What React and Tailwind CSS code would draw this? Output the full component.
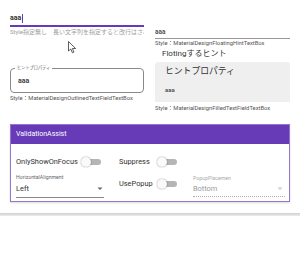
import React from "react";

const font = { fontFamily: 'Roboto, "Noto Sans CJK JP", sans-serif' };

function Toggle() {
  return (
    <div className="relative w-[20px] h-[10px] flex items-center">
      <div className="absolute left-[3px] right-0 h-[6px] rounded-full bg-[#b5b5b5]" />
      <div className="absolute left-0 w-[10px] h-[10px] rounded-full bg-[#fafafa] shadow-[0_0_1.5px_rgba(0,0,0,0.5)]" />
    </div>
  );
}

function Arrow({ color }) {
  return (
    <svg width="6" height="4" viewBox="0 0 6 4">
      <path d="M0.5 0.5 L5.5 0.5 L3 3 Z" fill={color} />
    </svg>
  );
}

export default function App() {
  return (
    <div className="w-[300px] h-[268px] bg-white overflow-hidden relative text-[#222]" style={font}>
      <div className="flex pl-[10px] pr-[10px] gap-[11px] h-[112px]">
        {/* left column */}
        <div className="w-[134px] flex flex-col">
          <div className="mt-[12px] h-[13px] flex items-center text-[7px] leading-none font-bold text-[#333]">
            aaa
            <span className="inline-block w-[1px] h-[9px] bg-[#673ab7] ml-[1px]" />
          </div>
          <div className="h-[2px] bg-[#673ab7]" />
          <div className="mt-[1px] h-[8px] text-[6px] leading-[8px] text-[#a0a0a0] whitespace-nowrap overflow-hidden">
            Style指定無し　長い文字列を指定すると改行はされず1
          </div>
          <div className="h-[32px] relative">
            <svg className="absolute left-[58px] top-[5px]" width="9" height="13" viewBox="0 0 9 13">
              <path d="M0.5 0.5 L0.5 10 L2.8 8 L4.4 11.8 L5.9 11.1 L4.4 7.5 L7.6 7.5 Z" fill="white" stroke="#333" strokeWidth="0.8" strokeLinejoin="round" />
            </svg>
          </div>
          <div className="relative h-[25px] rounded-[4px] border border-[#8a8a8a] flex items-center pl-[7px]">
            <span className="absolute left-[4px] -top-[4px] px-[2px] bg-white text-[4.2px] leading-[6px] text-[#555]">ヒントプロパティ</span>
            <span className="text-[7px] leading-none font-bold text-[#444] mt-[2px]">aaa</span>
          </div>
          <div className="mt-[1px] text-[5.8px] leading-[8px] text-[#555] whitespace-nowrap">
            Style：MaterialDesignOutlinedTextFieldTextBox
          </div>
        </div>
        {/* right column */}
        <div className="w-[135px] flex flex-col">
          <div className="mt-[26px] h-[12px] flex items-center text-[6.5px] leading-none font-bold text-[#555]">aaa</div>
          <div className="h-[1px] bg-[#999]" />
          <div className="h-[8px] text-[5.8px] leading-[8px] text-[#555] whitespace-nowrap">
            Style：MaterialDesignFloatingHintTextBox
          </div>
          <div className="mt-[2px] ml-[7px] text-[8px] leading-[10px] text-[#333]">Flotingするヒント</div>
          <div className="mt-[3px] h-[40px] bg-[#efefef] rounded-t-[3px] flex flex-col pl-[10px]">
            <div className="mt-[3px] text-[8.8px] leading-[12px] text-[#333]">ヒントプロパティ</div>
            <div className="mt-[10px] text-[6px] leading-[6px] font-bold text-[#555]">aaa</div>
          </div>
          <div className="mt-[2px] text-[5.8px] leading-[8px] text-[#555] whitespace-nowrap">
            Style：MaterialDesignFilledTextFieldTextBox
          </div>
        </div>
      </div>

      {/* card */}
      <div className="ml-[10px] mt-[12px] w-[280px] h-[78px] border border-[#9575cd] flex flex-col shadow-[0_1px_2px_rgba(0,0,0,0.15)]">
        <div className="h-[19px] bg-[#673ab7] flex items-center pl-[5px] text-white text-[7px] leading-none">ValidationAssist</div>
        <div className="flex-1 flex pl-[5px]">
          <div className="w-[88px] flex flex-col">
            <div className="mt-[12px] flex items-center h-[12px]">
              <span className="w-[65px] text-[7.4px] leading-none text-[#333]">OnlyShowOnFocus</span>
              <Toggle />
            </div>
            <div className="mt-[6px] h-[6px] text-[5.2px] leading-[6px] text-[#666] whitespace-nowrap">HorizontalAlignment</div>
            <div className="mt-[4px] flex items-center justify-between pr-[1px] h-[10px]">
              <span className="text-[7.4px] leading-none text-[#333]">Left</span>
              <Arrow color="#666" />
            </div>
            <div className="mt-[3px] h-[1px] bg-[#888]" />
          </div>
          <div className="ml-[15px] w-[58px] flex flex-col">
            <div className="mt-[12px] flex items-center h-[12px]">
              <span className="w-[38px] text-[7.4px] leading-none text-[#333]">Suppress</span>
              <Toggle />
            </div>
            <div className="mt-[10px] flex items-center h-[12px]">
              <span className="w-[38px] text-[7.4px] leading-none text-[#333]">UsePopup</span>
              <Toggle />
            </div>
          </div>
          <div className="ml-[16px] w-[92px] flex flex-col">
            <div className="mt-[31px] h-[6px] text-[5.2px] leading-[6px] text-[#aaa] whitespace-nowrap">PopupPlacemen</div>
            <div className="mt-[3px] flex items-center justify-between pr-[2px] h-[10px]">
              <span className="text-[7.4px] leading-none text-[#9a9a9a]">Bottom</span>
              <Arrow color="#ccc" />
            </div>
            <div className="mt-[2px] h-[1px] border-t border-dotted border-[#aaa]" />
          </div>
        </div>
      </div>

      <div className="mt-[11px] h-[3px] bg-gradient-to-b from-[#d0d0d0] to-[#ececec]" />
    </div>
  );
}
